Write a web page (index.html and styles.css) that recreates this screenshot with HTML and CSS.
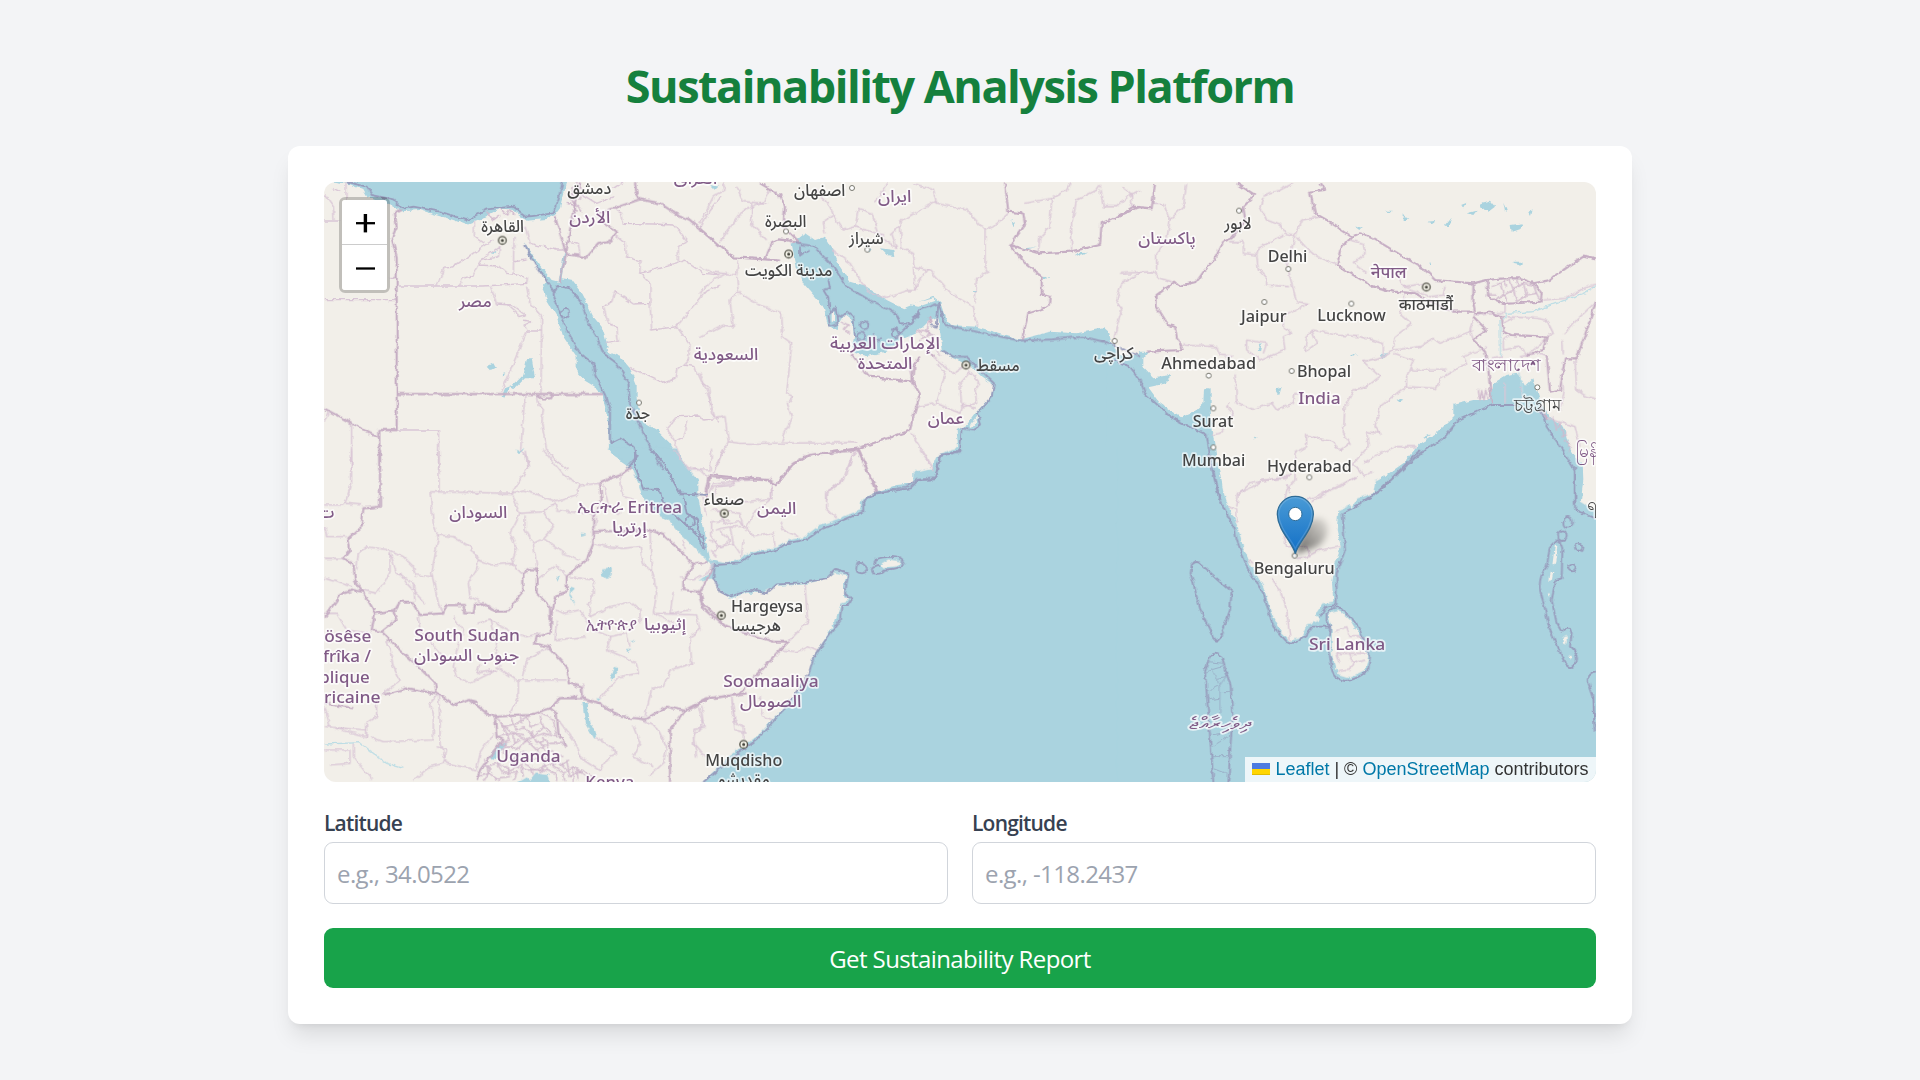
FILE: index.html
```html
<!DOCTYPE html>
<html lang="en">
<head>
<meta charset="utf-8">
<title>Sustainability Analysis Platform</title>
<link rel="stylesheet" href="styles.css">
</head>
<body>
<main class="page">
<h1 class="title">Sustainability Analysis Platform</h1>
<section class="card">
<div class="map">
<svg class="map-canvas" viewBox="972 546 3816 1800" role="img" aria-label="Map">
<defs>
<filter id="rough" filterUnits="userSpaceOnUse" x="900" y="500" width="3950" height="1900"><feTurbulence type="fractalNoise" baseFrequency="0.05" numOctaves="3" seed="4"/><feDisplacementMap in="SourceGraphic" scale="14" xChannelSelector="R" yChannelSelector="G"/></filter>
<filter id="soft" x="-50%" y="-50%" width="200%" height="200%"><feGaussianBlur stdDeviation="9"/></filter>
<linearGradient id="pin" x1="0" y1="0" x2="0" y2="1"><stop offset="0" stop-color="#4a9bd6"/><stop offset="1" stop-color="#126fc6"/></linearGradient>
<linearGradient id="shade" x1="0" y1="1" x2="1" y2="0"><stop offset="0" stop-opacity=".6"/><stop offset="1" stop-opacity=".06"/></linearGradient>
<g id="capital"><circle r="11.5" fill="#f6f4ea" stroke="#56564c" stroke-width="4"/><circle r="4.5" fill="#45453d"/></g>
<circle id="town" r="7.5" fill="#fff" stroke="#77776f" stroke-width="3"/>
</defs>
<g filter="url(#rough)">
<!-- Seas -->
<g class="water">
<g transform="translate(840 420)">
<path d="M132 120L165 126 205 132 250 150 262 172 330 195 365 214 420 210 480 228 520 240 560 255 600 240 625 225 660 205 700 210 740 242 800 237 825 225 840 205 850 165 864 120Z"/>
<path d="M735 310L745 340 770 380 800 425 790 440 800 480 830 530 850 590 890 650 890 695 915 722 945 740 967 765 975 800 985 850 987 930 1000 947 1040 975 1060 992 1212 992 1200 960 1170 910 1130 870 1085 845 1070 775 1070 735 1050 685 1020 650 985 635 978 600 965 560 940 530 905 460 875 420 848 415 858 340 852 340 836 425 815 420 775 370Z"/>
<path d="M700 735L730 705 742 655 755 655 765 715 735 715 705 745 690 740 672 775 665 770 675 745ZM620 680L640 670 648 685 632 693ZM665 700L676 697 671 705ZM708 938L718 932 734 920 718 942ZM628 338L650 332 640 342Z"/>
</g>
<g transform="translate(2100 510)">
<path d="M275 222L315 190 345 210 375 200 400 240 420 290 450 335 500 350 560 390 610 415 650 400 700 380 720 395 735 440 750 465 830 470 900 490 960 508 1050 485 1130 490 1210 475 1228 490 1235 520 1260 555 1330 560 1330 1000 480 1000 530 965 590 945 640 940 640 908 705 895 710 880 720 855 775 845 770 780 800 765 830 725 872 680 882 645 845 620 815 590 760 565 730 545 722 500 715 440 690 450 650 490 600 510 560 545 500 558 455 545 462 500 455 450 430 430 410 480 385 470 370 410 340 375 310 340 290 290Z"/>
<path d="M540 235L580 240 583 258 560 255ZM500 238L515 240 508 250ZM30 45L55 50 45 60ZM1125 250L1165 248 1140 257ZM965 235L1008 232 980 238ZM935 150L948 158 940 172ZM1025 320L1055 322 1030 328ZM817 360L832 360 826 369Z"/>
</g>
<g transform="translate(3360 510)">
<path d="M-40 560L30 570 60 545 88 545 60 580 100 622 152 615 140 640 85 652 120 700 180 742 230 720 250 700 252 655 272 655 272 720 280 800 290 870 305 930 312 1000 -40 1000Z"/>
<path d="M735 1000L765 965 770 935 850 880 900 820 950 790 1000 740 1000 705 1060 690 1110 690 1120 640 1160 615 1190 608 1215 650 1240 625 1260 690 1290 740 1330 770 1355 850 1388 880 1390 930 1382 1000Z"/>
<path d="M1080 100L1110 92 1125 110 1105 125 1085 115ZM1172 165L1212 160 1205 175 1175 185ZM920 155L945 153 942 163ZM848 130L858 145 865 150 848 150ZM792 122L815 122 810 128ZM1020 105L1038 98 1030 112ZM975 165L995 140 985 170ZM1150 98L1160 122 1155 125ZM1040 130L1070 122 1060 135ZM705 170L725 172 718 180ZM1180 275L1210 275 1200 285 1185 282ZM930 275L934 285 929 285ZM1228 130L1238 120 1233 138ZM465 655L485 650 478 675ZM830 685L850 692 838 698ZM690 555L712 552 696 560ZM782 552L802 550 790 565ZM910 800L932 790 920 806ZM410 540L425 520 420 545ZM398 803L410 805 403 811Z"/>
</g>
<g transform="translate(930 1350)">
<path d="M890 -5L930 20 965 50 985 100 1000 150 1040 190 1080 215 1110 250 1150 290 1195 337 1220 342 1200 330 1190 280 1175 200 1165 140 1165 90 1130 50 1100 -5Z"/>
<path d="M617 1002L650 982 660 990 675 970 715 975 722 1002ZM817 755L833 755 838 815 858 850 850 864 825 820ZM873 355L905 352 905 375 890 387 876 375ZM537 920L560 895 575 877 592 880 550 930ZM780 410L795 415 780 430 795 465 778 440ZM738 380L748 382 742 395ZM858 745L873 745 865 753ZM915 650L928 655 905 692 900 690ZM962 575L973 570 968 580ZM948 598L968 595 955 606ZM617 0L630 3 622 12ZM812 250L830 255 815 260Z"/>
</g>
<g transform="translate(2040 1350)">
<path d="M90 330L140 340 180 328 210 305 290 292 330 270 370 262 420 225 470 208 540 180 545 145 590 128 640 112 700 105 703 65 755 55 772 18 800 3 845 -10 1330 -10 1330 1010 55 1010 150 915 190 890 240 850 300 785 350 728 385 675 395 630 430 575 465 515 483 458 508 450 492 438 492 400 500 375 465 368 430 388 370 403 290 407 250 428 200 428 150 446 120 420 100 385 55 392 95 365Z"/>
</g>
<g transform="translate(3360 1350)">
<path d="M-10 -10L278 -10 300 90 325 170 350 220 370 290 390 340 430 410 455 490 480 540 510 572 545 562 560 525 600 510 590 490 610 460 640 455 636 400 645 340 662 290 650 240 655 180 690 165 695 172 712 145 760 130 765 95 800 80 860 40 900 -10 1330 -10 1360 40 1385 90 1375 150 1440 190 1440 1010 -10 1010Z"/>
</g>
</g>
<!-- Islands and shallow lagoons -->
<g class="land">
<path transform="translate(2040 1350)" d="M600 343L625 328 665 335 650 348 610 355Z"/>
<path transform="translate(3360 1350)" d="M625 490L660 482 690 510 720 560 745 620 735 660 690 682 650 670 635 610 635 540ZM1305 285L1312 290 1305 345 1297 345ZM1292 365L1300 365 1295 395 1288 395ZM1283 430L1290 430 1286 445ZM1330 560L1340 555 1340 580 1332 578ZM1348 615L1358 620 1352 632Z"/>
<path transform="translate(2100 510)" d="M395 425L405 425 405 455 395 455ZM425 450L450 445 455 490 435 510 418 490ZM810 765L832 735 828 760 815 775ZM630 405L700 385 705 393 655 410Z"/>
</g>
<!-- Provincial boundaries -->
<g class="province">
<path transform="translate(840 420)" d="M132 243H180M330 415H350M132 479H350M350 438H610L740 430 742 415 700 402 702 290M632 440L650 492 695 495 735 525 720 530 700 510 675 488M740 440L750 490 785 530 783 760M783 573H740L665 755M595 375L655 378 680 400 700 403M470 438L492 385 520 380 565 350 610 318 640 300M535 436L550 415 580 405 600 365 620 345 660 320 655 350 600 362M583 245V290L610 310M735 260L750 310 830 330 860 330M700 365L740 360M740 570L732 555 755 545 730 540M735 765L722 930 740 950 745 990M772 765L775 790 790 810 785 850 800 930 820 955 865 990M215 855V990M132 845L145 815M300 870H476V990M132 160L160 200 162 240M160 145L180 155M198 130V180M1000 205L1025 220 1030 250 1120 252 1180 255 1220 300 1195 320 1195 370 1210 360 1270 400 1320 405M1010 290L1035 310 1040 350 1080 365 1080 400 1195 370M1078 398L1110 430 1110 490 1060 492 1005 455 995 485 970 500 985 550 1010 560 1015 605 978 610M1110 490L1115 570 1190 560 1270 460 1320 435M1190 560L1230 615 1225 660 1210 675 1190 690 1185 715 1150 730 1050 682M1210 675L1245 680 1265 725 1285 740 1295 820 1315 845M1160 865L1190 830 1260 828 1270 840 1315 835M1160 865L1185 905 1210 890 1220 840M1185 905L1200 960M880 345L900 345 895 310 870 305M900 160L950 190 1000 170M1030 125L1000 145M1320 170L1290 210 1260 265"/>
<path transform="translate(2100 510)" d="M60 215L100 160 130 120 190 95 210 60M0 160L40 80 75 60 70 40M155 100L155 165 200 210M110 50L130 95 200 100M0 290L30 305 110 315 115 270M0 370L30 335 80 310M110 320L115 365 90 390 100 470 70 465 0 500M115 365L160 395 245 430 248 500 275 520 260 670 280 680 262 700 275 740 245 815M475 818L120 820 85 815 75 740 45 745 30 690 0 610M85 815L60 860 40 910M475 840L455 860 440 915 385 965 380 990M600 150L605 235 640 250 645 290 690 300 750 370 820 410 830 470M600 155L705 95 710 100 800 120 855 180 855 290 865 305 830 325 825 400M855 180L880 170 925 130M710 100L700 60 640 40M600 170L575 190 590 235 540 200 515 130 475 115 465 170 430 180 400 135 370 155 375 190M465 170L550 195M350 60L390 110 400 135M395 240L450 280 480 330 510 370 560 385 620 362 645 362 640 290M645 365L655 335 680 300M525 100L560 40M975 100L1055 85 1050 170 1020 200 1015 248M1055 85L1100 60 1110 40M1200 45L1190 60 1130 90 1115 160 1115 245M1320 310L1265 340 1250 390 1265 420 1250 470 1240 515M635 790L695 890M710 580L735 610 710 700 650 710M710 700L780 730 790 700 825 715M780 640L790 630 810 605 840 640 825 660 830 700 790 710M780 640L785 710M700 560L760 610 790 590M620 560L640 630M660 490L700 520 720 560M100 925L105 945 50 950 40 985M215 945V990M1200 60L1210 110 1250 110 1290 75 1320 60"/>
<path transform="translate(3360 510)" d="M0 310L100 305 120 325 155 335M200 40L190 110 150 150 140 210 110 250 110 300M430 75L480 60 520 40M430 80L420 110 440 150 480 165 495 190 525 195 510 260 500 280 515 340 530 395 565 400 490 440 490 475 515 490 490 500 495 540 420 570 380 540 380 510 440 520 430 550M330 215H370L370 250 410 255 415 235 490 195M410 255L415 300 440 325 440 345 510 350M525 195L545 150 600 140M530 200L560 235 590 260 650 285M190 525L290 530 300 555 340 560M345 610L350 700 400 718 455 700 470 720 520 700 525 670 575 680M330 700L320 710 340 730 300 790 275 795M555 545L560 500 580 480 650 495 720 500 790 520 790 560 730 575 780 620 740 650 700 660 675 710 670 790 690 820 660 840 635 815 560 795 560 830 525 850 525 930 500 960 495 990M555 545L590 520 575 480M790 560L820 540 825 500 875 460 840 430 855 375M820 540L900 530 940 505 960 520 1060 480M820 550L880 570 860 620 860 650 780 710 765 770 780 790 740 785 745 830 700 880 730 920 760 905M860 650L950 655 960 625 1040 580 1030 560 1100 530M870 595L880 600 980 600M730 880L760 860 830 830 890 830M355 975L390 940 500 920 510 910M560 990L650 950 710 920M975 350L970 375 930 380 850 350M1060 450L1050 480 1060 510M1170 495L1150 510 1150 540 1200 530 1220 555 1280 510M1280 560L1250 550 1200 560M1160 440L1250 445 1280 450 1300 490 1280 500 1180 495M1330 495L1370 450 1428 395M1328 510L1330 550M1150 460L1180 445M690 210L730 220 735 250 700 280 740 310M830 310L850 350 920 340M1270 390L1340 385 1390 355 1428 345M1155 400V430L1060 435M1365 565L1370 660 1400 680 1428 685M1325 600L1330 660 1320 720M1100 570L1150 560M1155 640V700M1200 650L1215 690M1260 730L1300 750 1365 770 1380 830M10 50L35 70 35 110M100 100L130 100 150 150"/>
<path transform="translate(930 1350)" d="M125 0V100L105 160 155 165M45 165H105M387 0V125M360 125L605 130 655 50 645 0M360 125L370 220 385 260 365 370 385 460 400 495M605 130L640 120 740 155 800 135 810 105 870 100M700 0L760 75 810 105M605 130L630 190 700 185 735 160 740 180 850 195M630 190L600 250 620 290 605 340 545 345 505 330 500 360 475 400 480 440 520 460M605 340L635 370M385 255L430 260 480 290 505 330M700 185L730 230 700 265 670 280 645 240 645 200M700 265L760 310 810 330M670 280L680 350M685 385L740 345 770 380M140 360L145 310 170 290 240 300 280 320 310 350 315 375 370 380M240 305L260 370 310 400 315 455M270 370L290 400 345 460M155 420L200 430 240 370 240 310M45 325L100 325M45 385L125 410M45 230L50 260 110 260M860 200L850 280 890 290 940 295 990 290 1000 340 1030 370 1040 430 1030 490 1110 530M880 105L900 180 930 190M930 80L940 140 980 150M1020 240L1025 380M780 380L850 390 850 430 835 460 840 500 900 470 960 455 990 480 990 520M740 480L760 490 810 480 850 540 900 560 890 600 940 620M740 510L735 570 830 560M1030 490L1160 495 1170 540 1140 560 1145 640 1080 660 1060 710 1025 715 1005 800M940 620L980 640 985 670 930 680 900 710 870 745M895 560L950 550 960 590M820 700L820 750M970 830L990 880 970 920 1030 950M1000 810L1040 830 1070 890 1060 940 1020 975M790 870L810 920 870 960 900 920 920 910 905 890 855 860M745 810L790 870M625 690V740L600 790M560 650L620 690 770 690M440 600L430 650 440 680 480 700 560 660 500 670 510 640M430 500L460 540 440 600M540 510L610 550 650 560 690 550M640 680L650 630 720 590M500 520L540 510 550 550 560 600 570 650M325 500L330 540 400 620M45 490L80 490 110 540 180 550M230 565L240 600 250 650 270 690 215 735M45 770L60 830 170 860 170 820 200 800 200 740M180 860L220 875 370 870 370 790 360 760 385 730M385 730L390 810 390 880 410 940 500 960 510 910 550 850M45 830L170 840M45 900L120 900 120 940 60 945M130 880L130 920 185 990M310 990L360 950 400 940 410 900 380 890M1110 380L1150 390 1190 370M1090 425L1080 490 1140 480M1265 740L1275 840 1310 850M1165 770L1180 820 1150 860 1160 920M1120 270L1125 300M1205 180L1230 180 1240 220 1290 215 1310 240M1200 270L1230 290 1260 270 1230 240M1205 0L1200 60 1140 60 1090 0M1200 130L1210 100 1320 90M1190 370L1210 340"/>
<path transform="translate(2040 1350)" d="M525 0L500 60 490 90 440 125 440 175 470 205M275 105L275 145 200 155 100 155M130 0L105 60M170 80L165 100 90 110M375 403L383 515 325 575 300 600 350 605 385 590 415 605M275 145L220 190 200 230 220 260 280 250 285 290M300 215L310 240 355 260M100 180L180 190 190 230 150 230 160 280 115 290 95 260 95 215 150 210M150 230L105 240M160 280L180 310M90 300L110 320M115 290L95 310M190 265L185 320M240 740L250 800 280 810M155 740L165 815 190 830 190 885M65 770L75 830 45 835 40 880 75 920M20 50L60 60 80 80M65 140L80 200M720 0L760 60"/>
<path transform="translate(3360 1350)" d="M350 170L355 130 390 115 430 90 500 85 515 60M325 170L350 180 350 215M500 100L510 130M575 155L620 125 660 110 710 80M490 250L500 290 560 290 570 320 530 325M560 320L600 300 660 290M455 385L480 420 500 480 510 570M385 330L400 340M645 545L680 530 690 560 735 560M660 640L650 610 740 610M650 665L690 660 700 640 685 610M700 640L735 630"/>
</g>
<!-- Dense district mesh around Uganda -->
<g class="province mesh" transform="translate(930 1350)">
<path d="M560 800L580 830 620 820 650 800 690 790 730 810 740 860 700 850 650 870 610 850 560 860M580 830L600 870 570 880 620 900 650 870 680 900 720 880 765 880M600 800L620 840 640 830 670 860 700 830 720 850M650 800L660 830 690 820M690 800L700 830M700 860L720 900 760 920M590 870L580 910 610 930 640 900M680 900L700 930 740 930 770 960M520 950L560 940 600 960 640 940 680 960 720 940 760 970 790 950 830 980M500 980L540 970 570 990M560 940L580 970 620 965 610 990M600 930L620 950 650 960 700 960 740 970 740 996M520 930L540 960 520 996M770 930L780 980 820 960 850 985M700 930L710 960M610 850L615 880M740 910L730 950M640 900L660 930 700 920M555 985L600 980M760 970L765 996M790 950V996M570 815L600 845 640 855M630 790L635 820M665 845L680 880 710 870M570 900L600 890 630 870M690 875L705 905M535 975L530 940M590 945L600 975M635 945L640 980M665 955L670 975M700 945L690 970M750 945L780 930M800 960L805 990"/>
</g>
<!-- Bhutan districts, delta channels -->
<g class="province mesh">
<path transform="translate(3360 510)" d="M1115 350L1140 340 1150 370 1130 390M1140 340L1170 330 1180 360 1150 375M1180 360L1210 340 1220 375 1190 395M1210 340L1240 345 1250 370 1220 375M1150 370L1165 400M1180 360L1190 395M1100 375H1130M1250 370L1262 395M1150 328L1160 350M1190 328L1195 350M1075 660L1080 690 1085 665 1092 690 1097 660 1105 690M1300 740L1310 780 1320 760 1330 800 1340 790M1335 810L1350 830 1345 850"/>
<path transform="translate(840 420)" d="M870 160L885 170 875 185 890 190 880 210M860 190L880 195 890 215M885 130L910 150 900 180M865 175L895 200 905 215M880 140L875 165M660 205L680 225 690 210 705 225M620 215L640 240 660 225"/>
<path transform="translate(2100 510)" d="M425 455L445 465 430 480 450 490M650 490L670 480 690 490 660 510M690 450L680 480 700 500 690 530"/>
</g>
<!-- Country borders -->
<g class="country">
<path transform="translate(840 420)" d="M365 210L345 220 350 260 335 295 350 350V870H298V990M350 762H968M132 805L298 895M825 228L858 340 840 425M900 130L870 270 858 342 920 352 955 312 990 305 1012 275 970 250 955 220 1000 205 1080 178 1140 190 1185 220 1230 240 1320 320M1065 126L1070 160 1082 180M770 765L785 775 810 775 815 765"/>
<path transform="translate(2100 510)" d="M0 178L100 262 195 268 240 272M195 268L215 220 235 208 270 212 300 222M300 222L250 170 255 110 240 75 180 40M915 40L925 125 970 130 975 165 930 225 980 285 1025 320 1025 375 1050 380 1045 410 985 430 965 510M930 225L1015 250 1110 245 1200 225 1205 160 1275 130 1320 110M450 545L505 620 637 635 660 672 628 782 475 835 325 857 275 885 230 945 200 930 130 925 30 915 20 985M637 635L640 590 660 560M475 835L532 965M690 440L695 460M685 540L700 560"/>
<path transform="translate(3360 510)" d="M0 135L40 110 95 115 105 40M350 40L405 75 370 110 375 150 335 205 310 215 285 270 255 300 230 335 180 348 165 335 110 375 110 410 145 465 165 470 170 500 188 540 80 545M600 40L615 60 570 65 585 130 620 150 695 200 720 190 760 205 850 260 910 295 945 330 1060 340 1100 330 1150 325 1200 325 1240 340 1290 330 1330 300 1390 260 1428 268M695 200L660 240 652 285 700 315 760 350 820 365 885 370M1060 340L1060 400 1065 425 1000 425 940 400 885 370M1100 330L1105 380 1150 402 1262 395 1265 370 1240 340M1065 430L1110 425 1145 440 1150 485 1170 495 1280 500 1270 540 1220 555M1060 440L1100 480 1060 510 1095 545 1105 600 1115 700M1280 555L1290 665 1320 660 1335 565 1370 565 1400 480 1428 395M1260 700L1280 750"/>
<path transform="translate(930 1350)" d="M210 0V170L160 175 155 230 115 265 120 300 100 325 130 340 135 390 155 420 185 470 195 490 255 480 270 455 305 455 330 495 400 490 410 465H462V490L490 490 495 465 520 460 560 485 590 485 640 425 640 370 658 358 680 358 680 430 720 470 722 550 680 560 675 580 715 590 770 650 780 700 815 712 818 750M45 500L90 435 130 420 155 425M195 490L185 540 215 545 260 510 250 485M215 545L270 600 325 650 375 700 380 730 290 715 220 735M380 730L430 765 480 750 530 790 555 800 660 795 720 775 750 745 790 740 800 735M720 775L740 790 745 850 770 890M555 800L560 860 580 870 540 920 510 960 500 990M740 745H815L870 760 930 800 1005 808 1070 770 1125 783 1200 745 1310 730M1125 783L1080 840V996M722 550L725 490 740 435 770 425 770 380 830 330 850 280 850 245 1020 240 1060 255 1120 310 1150 345 1195 335M870 100L875 150 850 200 850 245M870 100L900 85 930 75 965 50M1150 345L1120 390 1120 420 1170 425 1215 345M1170 425L1180 460 1250 530 1310 545M45 760L130 775M480 750L500 755"/>
<path transform="translate(2040 1350)" d="M75 135L85 80 135 85 270 90 290 105 340 40 385 15 535 0 590 128M55 430L70 475 120 520 200 550 280 575 325 575 175 735 80 745 15 780 0 805"/>
</g>
<!-- Territorial waters -->
<g class="marine">
<path transform="translate(840 420)" d="M200 126L260 140 275 165 340 178 360 200 375 205 400 200 480 215 560 240 620 208 700 200 740 230 820 220 835 180 848 126M735 315L770 380 825 460M820 460L835 438 870 445 905 490 925 550 950 590 970 640 1010 670 1045 730 1050 790 1080 860 1110 920 1150 990M820 460L835 510 870 590 900 640 940 670 945 705 975 765 990 810 990 910 1020 895 1060 920 1070 950 1040 985"/>
<circle transform="translate(840 420)" cx="854" cy="520" r="13"/>
<path transform="translate(2100 510)" d="M285 220L340 228 400 290 440 350 500 385 585 430 600 460 630 460 660 420 715 400 735 465 830 485 960 512 1060 508 1150 500 1230 520 1320 560M300 230L300 260 325 240M725 540L760 560 800 560 860 620 882 640 875 680 830 730 840 760 825 782 785 775 780 845 720 855 705 925 650 930 620 950 530 968 490 990M715 400L710 470 690 465M370 360L390 355 385 330M370 360L385 385 390 430 410 410 415 460 390 470 385 435M415 440L440 425 460 440 465 500M520 490L530 515 545 500M570 480L590 475 600 490 660 430"/>
<g transform="translate(2100 510)"><circle cx="493" cy="466" r="12"/><circle cx="483" cy="500" r="12"/><circle cx="587" cy="490" r="12"/></g>
<path transform="translate(3360 510)" d="M-20 570L30 590 60 630 75 670 150 740 260 795 275 890 298 990M735 990L780 960 900 850 970 805 1015 750 1115 705H1190M1260 720L1280 770 1320 830 1365 900 1365 1000"/>
<path transform="translate(930 1350)" d="M975 0L975 50 1000 118 1048 120 1060 160 1100 200 1165 260 1180 300M1030 0L1060 40 1110 130 1195 135M1120 140L1130 190 1165 210 1160 240 1180 265 1185 300M1140 200A14 14 0 1 0 1141 200"/>
<path transform="translate(2040 1350)" d="M105 345L180 340 210 315 290 300 320 280 380 268 420 240 550 185 550 150 590 130 690 115 715 90 765 88 780 20 845 0M105 345L100 385 120 425 150 440 210 420 260 430 290 403 360 400 440 385 465 360 505 370 495 430 515 450 505 465 485 465 480 510 430 580 400 625 385 675 310 780 230 870 160 920 70 996"/>
<path transform="translate(2040 1350)" d="M530 350Q530 330 545 338L560 352Q565 368 545 370 523 368 530 350ZM583 345Q580 325 610 322 665 315 672 340 665 360 610 362 605 375 580 370 565 350 600 348"/>
<path transform="translate(3360 1350)" d="M280 60L300 150 345 240 350 270 385 360 430 430 460 530 500 575 525 580 560 555 575 530 630 530M1365 50V180L1428 205M900 0L780 120 710 170 668 190 675 300 650 370 650 465 620 470 600 500M620 490Q640 465 665 475L700 510Q730 550 750 620L745 660Q710 690 675 693 640 685 635 655L625 580 630 530 620 515ZM215 345Q225 330 240 340L335 425 330 480 300 565Q290 580 280 565L240 475 212 370ZM268 625Q280 600 305 620L332 710 337 800 325 996M268 625L255 665 265 790 280 996M1310 270Q1325 275 1327 300L1325 385 1308 390 1295 450 1310 520 1325 545Q1350 525 1355 550L1350 590Q1375 610 1370 635 1350 665 1335 640L1290 540 1260 420Q1255 380 1280 350L1290 290ZM1428 665Q1405 665 1403 690L1420 740 1425 845"/>
<g transform="translate(3360 1350)"><ellipse cx="1343" cy="217" rx="13" ry="16"/><ellipse cx="1327" cy="257" rx="13" ry="16"/><circle cx="1376" cy="292" r="11"/><circle cx="1356" cy="353" r="11"/></g>
<path class="province" transform="translate(3360 1350)" d="M265 635L310 640M258 670L275 660 310 650M275 655L300 710 300 790M262 725L300 705 318 680 290 685M262 750L298 745M300 725H335M275 855L330 845M275 890L325 860M275 917H328M280 955L320 970"/>
</g>
<path class="river" d="M975 2232L1080 2228 1120 2260 1160 2290 1210 2305M4510 958L4520 940 4600 935 4750 880 4788 860M4500 960L4502 1070M4555 1115L4565 1145 4570 1190"/>
</g>
<!-- City symbols -->
<g>
<use href="#capital" x="1507" y="721"/><use href="#capital" x="2366" y="762"/><use href="#capital" x="2898" y="1095"/><use href="#capital" x="4279" y="861"/><use href="#capital" x="2173" y="1540"/><use href="#capital" x="2164" y="1846"/><use href="#capital" x="2231" y="2233"/>
<use href="#town" x="1917" y="1208"/><use href="#town" x="2556" y="564"/><use href="#town" x="2358" y="694"/><use href="#town" x="2602" y="749"/><use href="#town" x="3344" y="1023"/><use href="#town" x="3717" y="632"/><use href="#town" x="3865" y="807"/><use href="#town" x="3793" y="906"/><use href="#town" x="4054" y="911"/><use href="#town" x="3626" y="1127"/><use href="#town" x="3875" y="1113"/><use href="#town" x="3640" y="1225"/><use href="#town" x="3640" y="1342"/><use href="#town" x="3928" y="1432"/><use href="#town" x="3884" y="1667"/><use href="#town" x="4612" y="1162"/>
</g>
<!-- City names -->
<g class="label city">
<text x="1768" y="583" textLength="132" lengthAdjust="spacingAndGlyphs" class="mid">دمشق</text>
<text x="1508" y="697" textLength="128" lengthAdjust="spacingAndGlyphs" class="mid">القاهرة</text>
<text x="1914" y="1258" textLength="73" lengthAdjust="spacingAndGlyphs" class="mid">جدة</text>
<text x="2459" y="587" textLength="154" lengthAdjust="spacingAndGlyphs" class="mid">اصفهان</text>
<text x="2357" y="680" textLength="124" lengthAdjust="spacingAndGlyphs" class="mid">البصرة</text>
<text x="2599" y="732" textLength="104" lengthAdjust="spacingAndGlyphs" class="mid">شيراز</text>
<text x="2366" y="829" textLength="262" lengthAdjust="spacingAndGlyphs" class="mid">مدينة الكويت</text>
<text x="2994" y="1114" textLength="130" lengthAdjust="spacingAndGlyphs" class="mid">مسقط</text>
<text x="3341" y="1078" textLength="118" lengthAdjust="spacingAndGlyphs" class="mid">کراچی</text>
<text x="3714" y="686" textLength="82" lengthAdjust="spacingAndGlyphs" class="mid">لاہور</text>
<text x="3803" y="787" textLength="119" lengthAdjust="spacingAndGlyphs">Delhi</text>
<text x="3723" y="967" textLength="137" lengthAdjust="spacingAndGlyphs">Jaipur</text>
<text x="3952" y="963" textLength="205" lengthAdjust="spacingAndGlyphs">Lucknow</text>
<text x="4278" y="930" textLength="163" lengthAdjust="spacingAndGlyphs" class="mid">काठमाडौं</text>
<text x="3484" y="1108" textLength="284" lengthAdjust="spacingAndGlyphs">Ahmedabad</text>
<text x="3891" y="1132" textLength="162" lengthAdjust="spacingAndGlyphs">Bhopal</text>
<text x="3578" y="1281" textLength="122" lengthAdjust="spacingAndGlyphs">Surat</text>
<text x="3546" y="1399" textLength="190" lengthAdjust="spacingAndGlyphs">Mumbai</text>
<text x="3801" y="1417" textLength="254" lengthAdjust="spacingAndGlyphs">Hyderabad</text>
<text x="4612" y="1233" textLength="140" lengthAdjust="spacingAndGlyphs" class="mid">চট্টগ্রাম</text>
<text x="3761" y="1723" textLength="243" lengthAdjust="spacingAndGlyphs">Bengaluru</text>
<text x="2172" y="1516" textLength="120" lengthAdjust="spacingAndGlyphs" class="mid">صنعاء</text>
<text x="2193" y="1835" textLength="217" lengthAdjust="spacingAndGlyphs">Hargeysa</text>
<text x="2268" y="1894" textLength="150" lengthAdjust="spacingAndGlyphs" class="mid">هرجيسا</text>
<text x="2116" y="2298" textLength="231" lengthAdjust="spacingAndGlyphs">Muqdisho</text>
<text x="2232" y="2354" textLength="155" lengthAdjust="spacingAndGlyphs" class="mid">مقديشو</text>
<text x="4762" y="1530">ရန်</text>
</g>
<!-- Country names -->
<g class="label nation">
<text x="1769" y="669" textLength="123" lengthAdjust="spacingAndGlyphs" class="mid">الأردن</text>
<text x="1426" y="920" textLength="98" lengthAdjust="spacingAndGlyphs" class="mid">مصر</text>
<text x="2086" y="553" textLength="130" lengthAdjust="spacingAndGlyphs" class="mid">العراق</text>
<text x="2684" y="605" textLength="100" lengthAdjust="spacingAndGlyphs" class="mid">ایران</text>
<text x="2178" y="1079" textLength="194" lengthAdjust="spacingAndGlyphs" class="mid">السعودية</text>
<text x="2655" y="1046" textLength="330" lengthAdjust="spacingAndGlyphs" class="mid">الإمارات العربية</text>
<text x="2655" y="1107" textLength="164" lengthAdjust="spacingAndGlyphs" class="mid">المتحدة</text>
<text x="2838" y="1272" textLength="110" lengthAdjust="spacingAndGlyphs" class="mid">عمان</text>
<text x="3501" y="732" textLength="173" lengthAdjust="spacingAndGlyphs" class="mid">پاکستان</text>
<text x="4166" y="833" textLength="108" lengthAdjust="spacingAndGlyphs" class="mid">नेपाल</text>
<text x="3895" y="1213" textLength="127" lengthAdjust="spacingAndGlyphs">India</text>
<text x="4519" y="1112" textLength="207" lengthAdjust="spacingAndGlyphs" class="mid">বাংলাদেশ</text>
<text x="4728" y="1372">မြန်</text>
<text x="953" y="1555">ت</text>
<text x="1435" y="1555" textLength="174" lengthAdjust="spacingAndGlyphs" class="mid">السودان</text>
<text x="1731" y="1540" textLength="315" lengthAdjust="spacingAndGlyphs">ኤርትራ Eritrea</text>
<text x="1888" y="1600" textLength="104" lengthAdjust="spacingAndGlyphs" class="mid">إرتريا</text>
<text x="2330" y="1543" textLength="118" lengthAdjust="spacingAndGlyphs" class="mid">اليمن</text>
<text x="1757" y="1890" textLength="152" lengthAdjust="spacingAndGlyphs">ኢትዮጵያ</text>
<text x="1995" y="1890" textLength="126" lengthAdjust="spacingAndGlyphs" class="mid">إثيوبيا</text>
<text x="1243" y="1924" textLength="317" lengthAdjust="spacingAndGlyphs">South Sudan</text>
<text x="1400" y="1983" textLength="316" lengthAdjust="spacingAndGlyphs" class="mid">جنوب السودان</text>
<text x="973" y="1927" textLength="141" lengthAdjust="spacingAndGlyphs">ösêse</text>
<text x="969" y="1987" textLength="144" lengthAdjust="spacingAndGlyphs">frîka /</text>
<text x="958" y="2048" textLength="151" lengthAdjust="spacingAndGlyphs">blique</text>
<text x="972" y="2109" textLength="170" lengthAdjust="spacingAndGlyphs">ricaine</text>
<text x="2170" y="2060" textLength="286" lengthAdjust="spacingAndGlyphs">Soomaaliya</text>
<text x="2312" y="2121" textLength="184" lengthAdjust="spacingAndGlyphs" class="mid">الصومال</text>
<text x="1489" y="2287" textLength="193" lengthAdjust="spacingAndGlyphs">Uganda</text>
<text x="1756" y="2365" textLength="147" lengthAdjust="spacingAndGlyphs">Kenya</text>
<text x="3927" y="1951" textLength="229" lengthAdjust="spacingAndGlyphs">Sri Lanka</text>
<text x="3659" y="2186" textLength="184" lengthAdjust="spacingAndGlyphs" class="mid">ދިވެހިރާއްޖެ</text>
</g>
<!-- Location marker -->
<g transform="translate(3360 1350)">
<path d="M526 313C545 250 555 205 595 205 640 210 625 275 590 290Z" fill="url(#shade)" filter="url(#soft)"/>
<path d="M526 311C518 278 473 240 472 193A54 54 0 0 1 580 193C579 240 534 278 526 311Z" fill="url(#pin)" stroke="#2e6c97" stroke-width="4"/>
<path d="M526 296C516 270 477 235 476 193A50 50 0 0 1 576 193C575 235 536 270 526 296Z" fill="none" stroke="#fff" stroke-opacity=".15" stroke-width="4"/>
<circle cx="526" cy="192" r="20" fill="#fff" stroke="#2e6c97" stroke-width="3"/>
</g>
</svg>
<div class="zoom">
<button class="zoom-button" aria-label="Zoom in"><svg viewBox="0 0 19 19"><path d="M0 9.2H19" stroke-width="2.3"/><path d="M9.4 0V18.4" stroke-width="3.4"/></svg></button>
<button class="zoom-button" aria-label="Zoom out"><svg viewBox="0 0 19 19"><path d="M0 9.5H19" stroke-width="2.3"/></svg></button>
</div>
<div class="attribution"><svg class="flag" viewBox="0 0 18 12"><path fill="#4c7be1" d="M0 0h18v6H0z"/><path fill="#ffd500" d="M0 6h18v6H0z"/><path fill="#e0bc00" d="M0 11h18v1H0z"/></svg> <a>Leaflet</a> | © <a>OpenStreetMap</a> contributors</div>
</div>
<form class="form">
<label class="field"><span class="field-name">Latitude</span><input class="input" type="text" placeholder="e.g., 34.0522"></label>
<label class="field"><span class="field-name">Longitude</span><input class="input" type="text" placeholder="e.g., -118.2437"></label>
<button class="submit" type="button">Get Sustainability Report</button>
</form>
</section>
</main>
</body>
</html>
```
FILE: styles.css
```css
* { box-sizing: border-box; }
body {
  margin: 0;
  height: 1080px;
  overflow: hidden;
  background: #f3f4f6;
  font-family: "Open Sans", "Noto Sans", sans-serif;
}
.page { width: 1344px; margin: 0 auto; padding-top: 59px; }
.title {
  margin: 0 0 33px;
  font-size: 45px;
  line-height: 54px;
  font-weight: 700;
  letter-spacing: -1.5px;
  color: #15803d;
  text-align: center;
  white-space: nowrap;
}
.card {
  height: 878px;
  padding: 36px;
  border-radius: 12px;
  background: #fff;
  box-shadow: 0 15px 22.5px -4.5px rgba(0,0,0,.1), 0 6px 9px -6px rgba(0,0,0,.1);
}
.map {
  position: relative;
  height: 600px;
  border-radius: 12px;
  overflow: hidden;
  background: #f2efe9;
}
.map-canvas { display: block; width: 100%; height: 100%; }
.water path { fill: #aad3df; }
.land path { fill: #f2efe9; }
.province, .country, .marine { fill: none; stroke-linejoin: round; }
.province { stroke: #d9c6d6; stroke-width: 4; }
.mesh { stroke: #d0b9cd; }
.country { stroke: #c6aec4; stroke-width: 6.5; }
.marine { stroke: #989dbd; stroke-width: 5.5; }
.marine .province { stroke: #9bb0c8; stroke-width: 3; }
.river { fill: none; stroke: #bcdde5; stroke-width: 4; }
.label {
  font-family: "Noto Sans", "Noto Sans Arabic", "DejaVu Sans", sans-serif;
  font-size: 50px;
  font-weight: 500;
  stroke-width: 10px;
  stroke-linejoin: round;
  paint-order: stroke;
}
.label .mid { text-anchor: middle; }
.city { fill: #444; stroke: rgba(255,255,255,.65); }
.nation { fill: #805a86; stroke: rgba(255,255,255,.7); }
.zoom {
  position: absolute;
  top: 15px;
  left: 15px;
  border: 3px solid rgba(0,0,0,.2);
  border-radius: 6px;
  background-clip: padding-box;
}
.zoom-button {
  display: flex;
  align-items: center;
  justify-content: center;
  width: 45px;
  height: 45px;
  padding: 2px 0 0 1px;
  border: 0;
  background: #fff;
}
.zoom-button:first-child { border-bottom: 1px solid #ccc; border-radius: 3px 3px 0 0; }
.zoom-button:last-child { border-radius: 0 0 3px 3px; }
.zoom-button svg { width: 19px; height: 19px; fill: none; stroke: #000; }
.attribution {
  position: absolute;
  right: 0;
  bottom: 0;
  height: 25px;
  padding: 0 7.5px;
  background: rgba(255,255,255,.8);
  font: 18px/25px "Liberation Sans", Arial, sans-serif;
  color: #333;
  white-space: nowrap;
}
.attribution a { color: #0078a8; }
.flag { width: 18px; height: 12px; }
.form {
  display: grid;
  grid-template-columns: 1fr 1fr;
  gap: 24px;
  margin-top: 24px;
}
.field { display: flex; flex-direction: column; gap: 6px; }
.field-name {
  height: 30px;
  font-size: 21px;
  line-height: 34px;
  font-weight: 600;
  letter-spacing: -.8px;
  color: #374151;
}
.input {
  width: 100%;
  height: 62px;
  padding: 1px 12px 0;
  border: 1px solid #d1d5db;
  border-radius: 9px;
  background: #fff;
  font: inherit;
  font-size: 24px;
  letter-spacing: -.6px;
}
.input::placeholder { color: #9ca3af; opacity: 1; }
.submit {
  grid-column: 1 / -1;
  height: 60px;
  padding: 1px 0 0;
  border: 0;
  border-radius: 9px;
  background: #18a34a;
  font: inherit;
  font-size: 24px;
  letter-spacing: -.6px;
  color: #fff;
}
```
